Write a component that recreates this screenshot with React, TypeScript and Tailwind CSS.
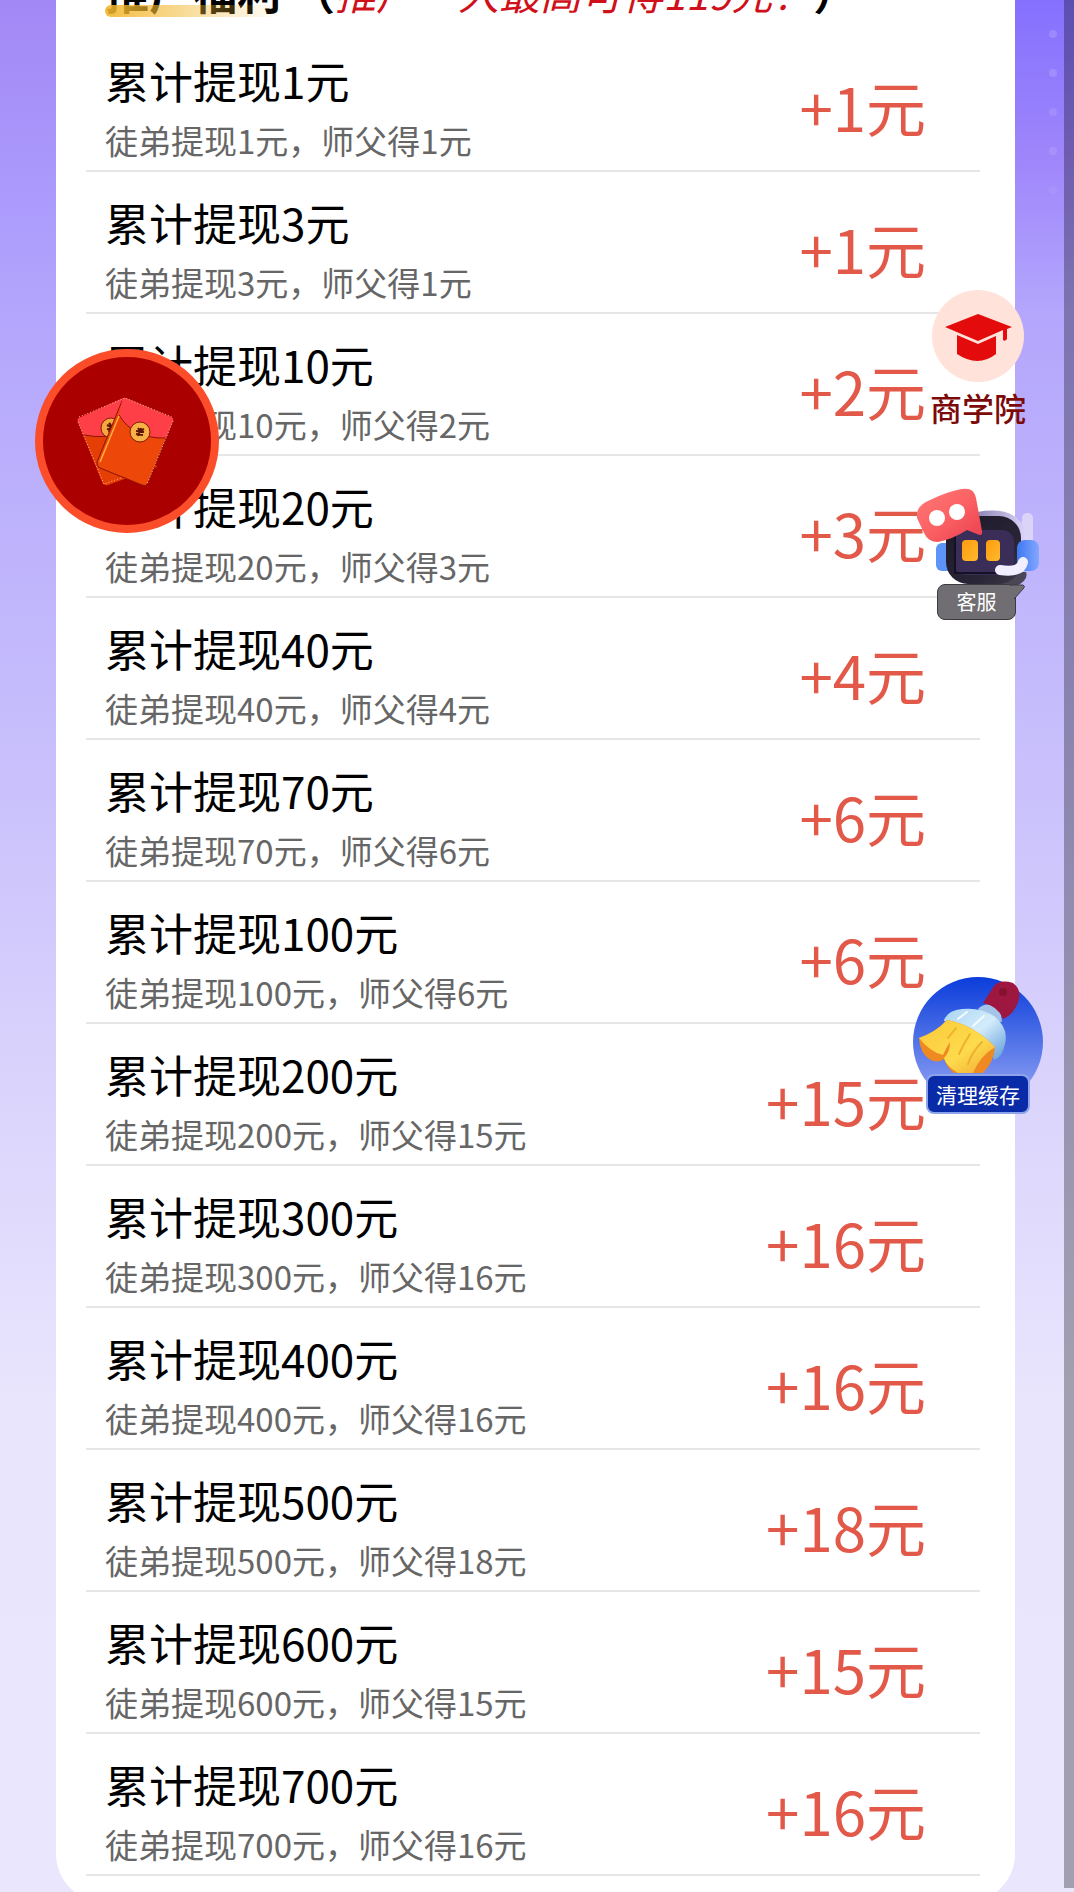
import React from 'react';

interface Reward {
  amount: number;
  bonus: number;
}

const rewards: Reward[] = [
  { amount: 1, bonus: 1 },
  { amount: 3, bonus: 1 },
  { amount: 10, bonus: 2 },
  { amount: 20, bonus: 3 },
  { amount: 40, bonus: 4 },
  { amount: 70, bonus: 6 },
  { amount: 100, bonus: 6 },
  { amount: 200, bonus: 15 },
  { amount: 300, bonus: 16 },
  { amount: 400, bonus: 16 },
  { amount: 500, bonus: 18 },
  { amount: 600, bonus: 15 },
  { amount: 700, bonus: 16 },
];

const RewardRow: React.FC<Reward> = ({ amount, bonus }) => (
  <li className="flex items-center justify-between border-b-2 border-[#e6e6e6] pt-5 pr-[54px] pb-2 pl-[19px]">
    <div className="space-y-2">
      <h3 className="text-[44px] leading-[60px] text-black">累计提现{amount}元</h3>
      <p className="text-[33px] leading-[44px] text-[#666]">
        徒弟提现{amount}元，师父得{bonus}元
      </p>
    </div>
    <span className="text-[60px] leading-[80px] text-[#e25949]">+{bonus}元</span>
  </li>
);

const Envelopes = () => (
  <svg viewBox="2 -2 100 92" className="w-[100px]" aria-hidden="true">
    <g strokeLinejoin="round">
      <path d="M4 21 L50 2 L82 70 L33 88 Q29 89 27 85 L3 25 Q2 22 4 21Z" fill="#e53f05" />
      <path d="M4 21 L48 1 Q51 0 53 4 L60 34 Q35 42 9 38 L3 25 Q2 22 4 21Z" fill="#fe3f48" />
      <path d="M9 38 Q30 42 50 36" fill="none" stroke="#8d1208" />
      <circle cx="36" cy="31" r="10" fill="#f6a83f" stroke="#7d1c08" />
      <path d="M32 28l4 2 3-3M36 28l-2 7M32 32l7 1M34 26l2 2" fill="none" stroke="#5a1606" strokeWidth="2" />
      <path d="M51 1 L96 20 Q99 21 98 24 L73 86 Q71 90 67 88 L25 71 Q21 69 22 65 L47 4 Q48 0 51 1Z" fill="#ed4709" stroke="#8d1208" />
      <path d="M51 1 L96 20 Q99 21 98 24 L91 41 Q58 42 44 18 L47 4 Q48 0 51 1Z" fill="#fe3f48" />
      <path d="M44 18 Q58 42 91 41" fill="none" stroke="#8d1208" />
      <path d="M44 19 L25 65" fill="none" stroke="#ffb03d" strokeWidth="1.5" />
      <circle cx="65" cy="35" r="10" fill="#f9b044" stroke="#7d1c08" />
      <path d="M63 31l2 3 4-2M66 31l-3 8M61 34l8 1M61 37l7 1" fill="none" stroke="#5a1606" strokeWidth="2" />
      <path d="M4 20 L50 1 L97 20 M98 24 L72 87 M3 25 L29 87 L46 81" fill="none" stroke="#ffb9a8" strokeWidth="1" strokeDasharray="1 2" />
    </g>
  </svg>
);

const GraduationCap = () => (
  <svg viewBox="0 0 92 92" className="w-[92px]" aria-hidden="true">
    <circle cx="46" cy="46" r="46" fill="#ffe2da" />
    <path d="M46 24 L80 37 L75 39 V49 Q73 52 71 50 V40 L46 51 L13 37Z" fill="#e30b0b" />
    <path d="M25 45 L46 54 L64 46 V64 Q46 78 25 64Z" fill="#e30b0b" />
  </svg>
);

const Robot = () => (
  <svg viewBox="0 0 126 98" className="w-[126px]" aria-hidden="true">
    <defs>
      <linearGradient id="bubble" x1="0" y1="0" x2="1" y2="1">
        <stop offset="0" stopColor="#ff7a78" />
        <stop offset="0.5" stopColor="#fb6163" />
        <stop offset="1" stopColor="#e93e50" />
      </linearGradient>
      <linearGradient id="head" x1="0" y1="0" x2="1" y2="1">
        <stop offset="0" stopColor="#1b1726" />
        <stop offset="0.7" stopColor="#2a2638" />
        <stop offset="1" stopColor="#3d3a48" />
      </linearGradient>
      <linearGradient id="band" x1="0" y1="0" x2="1" y2="0">
        <stop offset="0" stopColor="#8f86b8" />
        <stop offset="1" stopColor="#ddd6fa" />
      </linearGradient>
      <linearGradient id="ear" x1="0" y1="0" x2="1" y2="0">
        <stop offset="0" stopColor="#3d78f2" />
        <stop offset="1" stopColor="#84a7ff" />
      </linearGradient>
      <linearGradient id="eye" x1="0" y1="0" x2="1" y2="1">
        <stop offset="0" stopColor="#ff9a10" />
        <stop offset="1" stopColor="#fdba2c" />
      </linearGradient>
    </defs>
    <rect x="106" y="25" width="11" height="38" rx="5" fill="#dcd4f8" />
    <rect x="20" y="55" width="18" height="28" rx="6" fill="#5c94f8" />
    <path d="M62 28 Q106 20 110 58" fill="none" stroke="url(#band)" strokeWidth="8" />
    <path d="M92 84H110Q113 92 100 98H80Z" fill="#4a4653" />
    <rect x="30" y="28" width="75" height="68" rx="22" fill="url(#head)" />
    <rect x="38" y="42" width="60" height="45" rx="12" fill="#3a2d58" />
    <path d="M39 45V85H88" fill="none" stroke="#151124" strokeWidth="2" />
    <rect x="46" y="52" width="16" height="21" rx="4" fill="url(#eye)" />
    <rect x="70" y="52" width="14" height="21" rx="4" fill="url(#eye)" />
    <rect x="101" y="52" width="22" height="31" rx="8" fill="url(#ear)" />
    <path d="M84 82 Q105 85 107 74" fill="none" stroke="#f1eeff" strokeWidth="10" strokeLinecap="round" />
    <path d="M14 12 Q30 4 46 1 Q58 -1 60 10 L66 43 Q67 49 61 46 L51 42 Q37 51 22 54 Q12 54 8 45 L1 30 Q-1 18 14 12Z" fill="url(#bubble)" />
    <circle cx="21" cy="30" r="8" fill="#fff" />
    <circle cx="41" cy="24" r="8" fill="#fff" />
  </svg>
);

const Brush = () => (
  <svg viewBox="0 0 132 132" className="w-[132px]" aria-hidden="true">
    <defs>
      <linearGradient id="disc" x1="0" y1="0" x2="0" y2="1">
        <stop offset="0" stopColor="#0b3ddb" />
        <stop offset="1" stopColor="#9aaaf5" />
      </linearGradient>
      <linearGradient id="ferrule" x1="0" y1="0" x2="1" y2="1">
        <stop offset="0" stopColor="#a9d4f2" />
        <stop offset="0.5" stopColor="#d3ecfb" />
        <stop offset="1" stopColor="#5c9ad8" />
      </linearGradient>
      <linearGradient id="bristle" x1="0" y1="0" x2="1" y2="1">
        <stop offset="0" stopColor="#fbc93a" />
        <stop offset="0.6" stopColor="#fddb4c" />
        <stop offset="1" stopColor="#f2a832" />
      </linearGradient>
    </defs>
    <circle cx="66" cy="66" r="65" fill="url(#disc)" />
    <path d="M66 33 Q74 24 88 33 L90 46 L76 44Z" fill="#a4c4ea" />
    <path d="M71 27 L82 10 Q88 3 101 7 Q109 13 107 23 Q103 38 91 43 Q86 30 71 27Z" fill="#9e1740" />
    <circle cx="91" cy="16" r="4" fill="#86112f" />
    <path d="M32 44 Q36 34 50 33 Q68 31 82 40 Q97 52 93 68 Q90 82 82 84 L78 70 Q58 49 32 45Z" fill="url(#ferrule)" />
    <path d="M7 62 Q24 56 35 44 Q62 49 83 71 Q82 86 71 97 H42 Q35 92 32 83 Q26 88 17 83 Q8 77 7 62Z" fill="#ef8a22" />
    <path d="M7 62 Q24 56 35 44 Q62 49 83 71 Q68 80 61 97 H46 Q34 90 32 82 Q38 76 38 66 Q34 72 31 79 Q18 76 7 62Z" fill="url(#bristle)" />
    <path d="M44 52 L36 62 M58 58 Q52 67 47 78 M70 66 Q60 76 56 88" fill="none" stroke="#eeb030" strokeWidth="2" strokeLinecap="round" />
    <path d="M55 36 L46 43 M72 40 L61 50" stroke="#f3fbff" strokeWidth="2" strokeLinecap="round" />
  </svg>
);

export default function App() {
  return (
    <div className="relative h-screen overflow-hidden bg-[linear-gradient(180deg,#a288f5_0%,#ab9afc_10%,#b6a9fc_19%,#c6bdfc_38%,#d9d2fc_56%,#e9e5fd_74%,#e9e6fd_100%)] font-['Noto_Sans_CJK_SC',sans-serif]">
      {/* Deeper violet and a column of faint dots on the right side of the backdrop */}
      <div className="absolute top-0 right-0 flex h-80 w-[60px] flex-col items-end gap-[31px] bg-linear-to-b from-[#8570fe] via-[#9f86fb] to-[#b5a8fc] pt-[30px] pr-[17px]">
        <span className="size-2 rounded-full bg-white/15" />
        <span className="size-2 rounded-full bg-white/15" />
        <span className="size-2 rounded-full bg-white/10" />
        <span className="size-2 rounded-full bg-white/10" />
        <span className="size-2 rounded-full bg-white/5" />
      </div>

      <main className="relative mr-[59px] ml-14 rounded-b-[48px] bg-white pr-[35px] pb-[26px] pl-[30px]">
        {/* Section heading */}
        <header className="flex h-[30px] items-end pb-4 pl-[19px]">
          <h2 className="flex shrink-0 items-baseline text-[44px] leading-[44px] font-bold whitespace-pre text-black">
            <span className="relative">
              推广福利
              <span className="absolute -bottom-1 left-0 h-3 w-full rounded-l-full bg-linear-to-r from-[#f2b62c]/90 to-[#f2b62c]/0" />
            </span>
            {' （'}
            <em className="text-[41px] font-normal text-[#d0101b]">推广一人最高可得119元！</em>
            ）
          </h2>
        </header>

        <ul>
          {rewards.map((reward) => (
            <RewardRow key={reward.amount} {...reward} />
          ))}
        </ul>
      </main>

      {/* Floating shortcuts */}
      <button
        aria-label="红包"
        className="absolute top-[349px] left-[35px] flex size-[184px] items-center justify-center rounded-full border-8 border-[#fc4d2b] bg-[#ab0000]"
      >
        <Envelopes />
      </button>

      <button className="absolute top-[290px] right-12 flex flex-col items-center">
        <GraduationCap />
        <span className="mt-0.5 text-[32px] leading-[46px] font-medium text-[#7c0a0a]">商学院</span>
      </button>

      <button className="absolute top-[488px] right-8 flex flex-col items-start">
        <Robot />
        <span className="relative -mt-0.5 ml-[21px] w-[79px] rounded-lg border border-[#3c3a40] bg-[#706e72] text-center text-xl leading-[34px] text-white">
          客服
          <svg viewBox="0 0 14 16" className="absolute -top-px -right-[11px] w-[14px]" aria-hidden="true">
            <path d="M0 1 H11 Q14 2 11 5 L2 15 H0Z" fill="#706e72" />
            <path d="M0 1 H11 Q14 2 11 5 L2 15" fill="none" stroke="#3c3a40" />
          </svg>
        </span>
      </button>

      <button className="absolute top-[976px] right-[30px] flex flex-col items-center">
        <Brush />
        <span className="relative -mt-[34px] rounded-lg border-2 border-[#8da4ea] bg-[#0a2ba8] px-2 text-[21px] leading-9 text-white">
          清理缓存
        </span>
      </button>

      {/* Scroll track */}
      <div className="absolute top-0 right-0 bottom-1 w-2.5 bg-black/30" />
    </div>
  );
}
